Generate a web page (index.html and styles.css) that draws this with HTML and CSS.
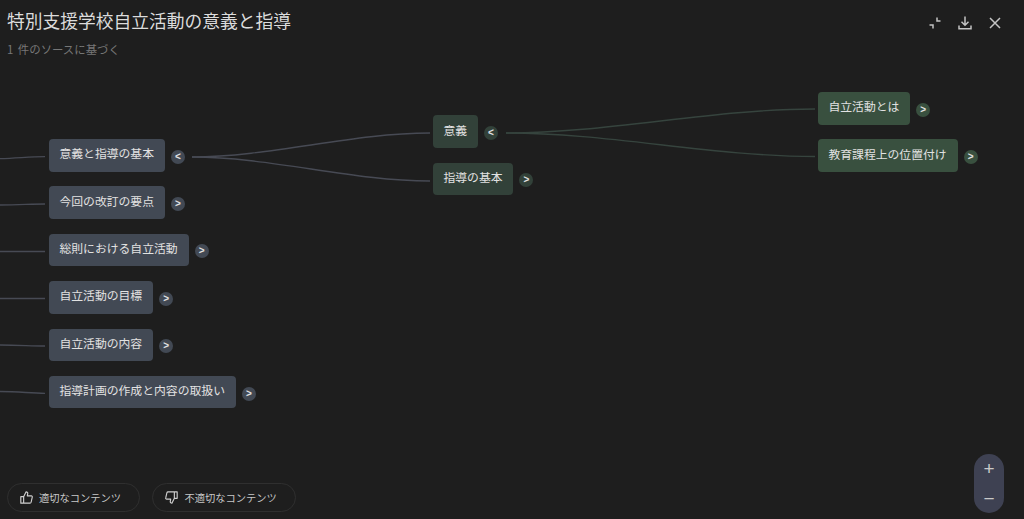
FILE: index.html
```html
<!DOCTYPE html>
<html lang="ja">
<head>
<meta charset="utf-8">
<title>特別支援学校自立活動の意義と指導</title>
<link rel="stylesheet" href="styles.css">
</head>
<body>
<main class="app">
  <header class="header">
    <div class="heading">
      <h1 class="title">特別支援学校自立活動の意義と指導</h1>
      <p class="subtitle">1 件のソースに基づく</p>
    </div>
    <div class="actions">
      <button class="icon-btn" aria-label="collapse">
        <svg width="16" height="16" viewBox="0 0 16 16" fill="none" stroke="#c4c4c4" stroke-width="1.5"><path d="M10 2.500V6h3.500M2.500 10H6v3.500"/></svg>
      </button>
      <button class="icon-btn" aria-label="download">
        <svg width="16" height="16" viewBox="0 0 16 16" fill="none" stroke="#c4c4c4" stroke-width="1.5"><path d="M8 1.500v8.500M4.500 6.800 8 10.200l3.500-3.400M2 10.500v3.200h12v-3.200"/></svg>
      </button>
      <button class="icon-btn" aria-label="close">
        <svg width="16" height="16" viewBox="0 0 16 16" fill="none" stroke="#c4c4c4" stroke-width="1.5"><path d="M3 3l10 10M13 3 3 13"/></svg>
      </button>
    </div>
  </header>

  <section class="canvas">
    <svg class="edges" width="1024" height="519" viewBox="0 0 1024 519" fill="none">
      <g class="edge-left">
        <path d="M0 158.700C20 158 30 156.700 45 156.700"/>
        <path d="M0 205C20 205 30 204 45 204"/>
        <path d="M0 251.500H45"/>
        <path d="M0 298.500H45"/>
        <path d="M0 345C20 345 30 346 45 346"/>
        <path d="M0 391.500C20 391.500 30 393.300 45 393.300"/>
        <path d="M192 157C270 157 352 133 430 133"/>
        <path d="M192 157C270 157 352 181 430 181"/>
      </g>
      <g class="edge-right">
        <path d="M506 133C608 133 713 109 815 109"/>
        <path d="M506 133C608 133 713 156.500 815 156.500"/>
      </g>
    </svg>

    <div class="item i1"><div class="node slate">意義と指導の基本</div><span class="toggle slate">&lt;</span></div>
    <div class="item i2"><div class="node slate">今回の改訂の要点</div><span class="toggle slate">&gt;</span></div>
    <div class="item i3"><div class="node slate">総則における自立活動</div><span class="toggle slate">&gt;</span></div>
    <div class="item i4"><div class="node slate">自立活動の目標</div><span class="toggle slate">&gt;</span></div>
    <div class="item i5"><div class="node slate">自立活動の内容</div><span class="toggle slate">&gt;</span></div>
    <div class="item i6"><div class="node slate">指導計画の作成と内容の取扱い</div><span class="toggle slate">&gt;</span></div>

    <div class="item i7"><div class="node moss">意義</div><span class="toggle moss">&lt;</span></div>
    <div class="item i8"><div class="node moss">指導の基本</div><span class="toggle moss">&gt;</span></div>

    <div class="item i9"><div class="node leaf">自立活動とは</div><span class="toggle leaf">&gt;</span></div>
    <div class="item i10"><div class="node leaf">教育課程上の位置付け</div><span class="toggle leaf">&gt;</span></div>
  </section>

  <footer class="feedback">
    <button class="pill">
      <svg width="13" height="13" viewBox="0 0 16 16" fill="none" stroke="#cfcfcf" stroke-width="1.4" stroke-linejoin="round"><path d="M1 7h3.500v8H1zM4.500 7 7.500 1c1.400 0 2.200.9 2 2.200L9 6h5c.8 0 1.300.7 1.100 1.400l-1.400 6.400c-.2.700-.7 1.200-1.400 1.200H4.500"/></svg>
      適切なコンテンツ
    </button>
    <button class="pill">
      <svg width="13" height="13" viewBox="0 0 16 16" fill="none" stroke="#cfcfcf" stroke-width="1.4" stroke-linejoin="round"><path d="M15 9h-3.500V1H15zM11.500 9l-3 6c-1.400 0-2.200-.9-2-2.200L7 10H2c-.8 0-1.300-.7-1.100-1.400l1.400-6.400C2.500 1.500 3 1 3.700 1h7.800"/></svg>
      不適切なコンテンツ
    </button>
  </footer>

  <div class="zoom">
    <span class="zoom-sign">+</span>
    <span class="zoom-sign">−</span>
  </div>
</main>
</body>
</html>
```

FILE: styles.css
```css
* { box-sizing: border-box; }

html, body {
  margin: 0;
  height: 100%;
  background: #1e1e1e;
  overflow: hidden;
}

body {
  font-family: "Noto Sans CJK JP", "Noto Sans", sans-serif;
  color: #e3e3e3;
}

.app {
  position: relative;
  width: 1024px;
  height: 519px;
  overflow: hidden;
}

.header {
  position: relative;
  z-index: 1;
  display: flex;
  justify-content: space-between;
  align-items: flex-start;
  padding: 7px 21px 0 7px;
}

.title {
  margin: 0;
  font-size: 17.750px;
  line-height: 26px;
  font-weight: 400;
  color: #dcdcdc;
}

.subtitle {
  margin: 8px 0 0;
  font-size: 11.400px;
  line-height: 16px;
  word-spacing: 2px;
  color: #767676;
}

.actions {
  display: flex;
  gap: 14px;
  padding-top: 8px;
}

.icon-btn {
  display: flex;
  width: 16px;
  height: 16px;
  padding: 0;
  border: 0;
  background: none;
}

.canvas {
  position: absolute;
  inset: 0;
}

.edges {
  position: absolute;
  inset: 0;
}

.edges path { stroke-width: 1.3; }
.edge-left path { stroke: #474a54; }
.edge-right path { stroke: #36443e; }

.item {
  position: absolute;
  display: flex;
  align-items: center;
  gap: 6px;
}

.i1 { left: 49px; top: 139px; }
.i2 { left: 49px; top: 186.300px; }
.i3 { left: 49px; top: 233.700px; }
.i4 { left: 49px; top: 281px; }
.i5 { left: 49px; top: 328.500px; }
.i6 { left: 49px; top: 375.800px; }
.i7 { left: 433px; top: 115.300px; }
.i8 { left: 433px; top: 162.700px; }
.i9 { left: 818px; top: 92px; }
.i10 { left: 818px; top: 139.300px; }

.node {
  height: 32.500px;
  padding: 0 10.900px 4px 10.400px;
  display: flex;
  align-items: center;
  border-radius: 4px;
  font-size: 11.840px;
  line-height: 16px;
  color: #e2e2e2;
  white-space: nowrap;
}

.toggle {
  width: 14px;
  height: 14px;
  margin-top: 3px;
  border-radius: 50%;
  display: flex;
  align-items: center;
  justify-content: center;
  font-family: "Liberation Sans", sans-serif;
  font-size: 10px;
  font-weight: 700;
  line-height: 14px;
  color: #e2e2e2;
}

.slate { background: #424954; }
.moss { background: #324139; }
.leaf { background: #39503f; }

.feedback {
  position: absolute;
  left: 7px;
  top: 483px;
  display: flex;
  gap: 12px;
}

.pill {
  display: flex;
  align-items: center;
  gap: 6px;
  height: 29px;
  padding: 0 18.400px 0 12px;
  border: 1px solid #2f2f2f;
  border-radius: 15px;
  background: none;
  font-family: inherit;
  font-size: 10.250px;
  color: #c8c8c8;
}

.zoom {
  position: absolute;
  left: 974px;
  top: 454px;
  width: 30px;
  height: 59px;
  border-radius: 15px;
  background: #3e4152;
  display: flex;
  flex-direction: column;
  justify-content: space-between;
  align-items: center;
}

.zoom-sign {
  font-family: "Liberation Sans", sans-serif;
  font-size: 19px;
  line-height: 30px;
  color: #c9c9c9;
}
```
